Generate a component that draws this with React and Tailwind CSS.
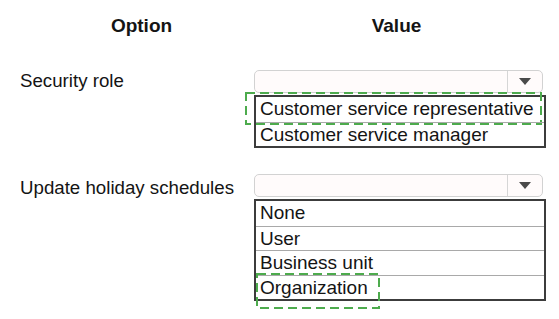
import React from "react";

function Dashed({ className, w, h }) {
  return (
    <svg
      className={`absolute pointer-events-none ${className}`}
      width={w}
      height={h}
    >
      <rect
        x="1"
        y="1"
        width={w - 2}
        height={h - 2}
        fill="none"
        stroke="#4dab4d"
        strokeWidth="2"
        strokeDasharray="9 5"
      />
    </svg>
  );
}

function SelectBox() {
  return (
    <div className="flex h-[23px] w-[289px] rounded-[5px] border border-[#d2d2d2] bg-[#fffbfb]">
      <div className="flex-1" />
      <div className="flex w-[35px] items-center justify-center border-l border-[#d6d6d6]">
        <svg width="12" height="7" viewBox="0 0 12 7">
          <polygon points="0,0 12,0 6,7" fill="#4a4a4a" />
        </svg>
      </div>
    </div>
  );
}

function OptionList({ items, pick, box }) {
  return (
    <div className="relative mt-[2px] w-[292px] border-2 border-[#3c3c3c] bg-white text-[19px]">
      {items.map((item, i) => (
        <div
          key={item}
          className={`relative h-[24.5px] pl-[4px] leading-[24.5px] ${i > 0 ? "border-t border-[#a9a9a9]" : ""}`}
        >
          {item}
          {i === pick && box}
        </div>
      ))}
    </div>
  );
}

export default function App() {
  return (
    <div className="h-[319px] w-[559px] bg-white pt-[15px] font-['Liberation_Sans',Arial,sans-serif] text-[#141414]">
      <div className="flex h-[22px] text-[19px] font-bold leading-[22px]">
        <div className="w-[283px] text-center">Option</div>
        <div className="w-[227px] text-center">Value</div>
      </div>

      {/* Security role */}
      <div className="mt-[33px] flex">
        <div className="w-[254px] pl-[20px] text-[18.7px] leading-[21px]">Security role</div>
        <div>
          <SelectBox />
          <OptionList
            items={["Customer service representative", "Customer service manager"]}
            pick={0}
            box={<Dashed className="left-[-11px] top-[-5px]" w={297} h={33} />}
          />
        </div>
      </div>

      {/* Update holiday schedules */}
      <div className="mt-[26px] flex">
        <div className="mt-[3px] w-[254px] pl-[20px] text-[18.7px] leading-[21px]">
          Update holiday schedules
        </div>
        <div>
          <SelectBox />
          <OptionList
            items={["None", "User", "Business unit", "Organization"]}
            pick={3}
            box={<Dashed className="left-0 top-[-3px]" w={124} h={36} />}
          />
        </div>
      </div>
    </div>
  );
}
